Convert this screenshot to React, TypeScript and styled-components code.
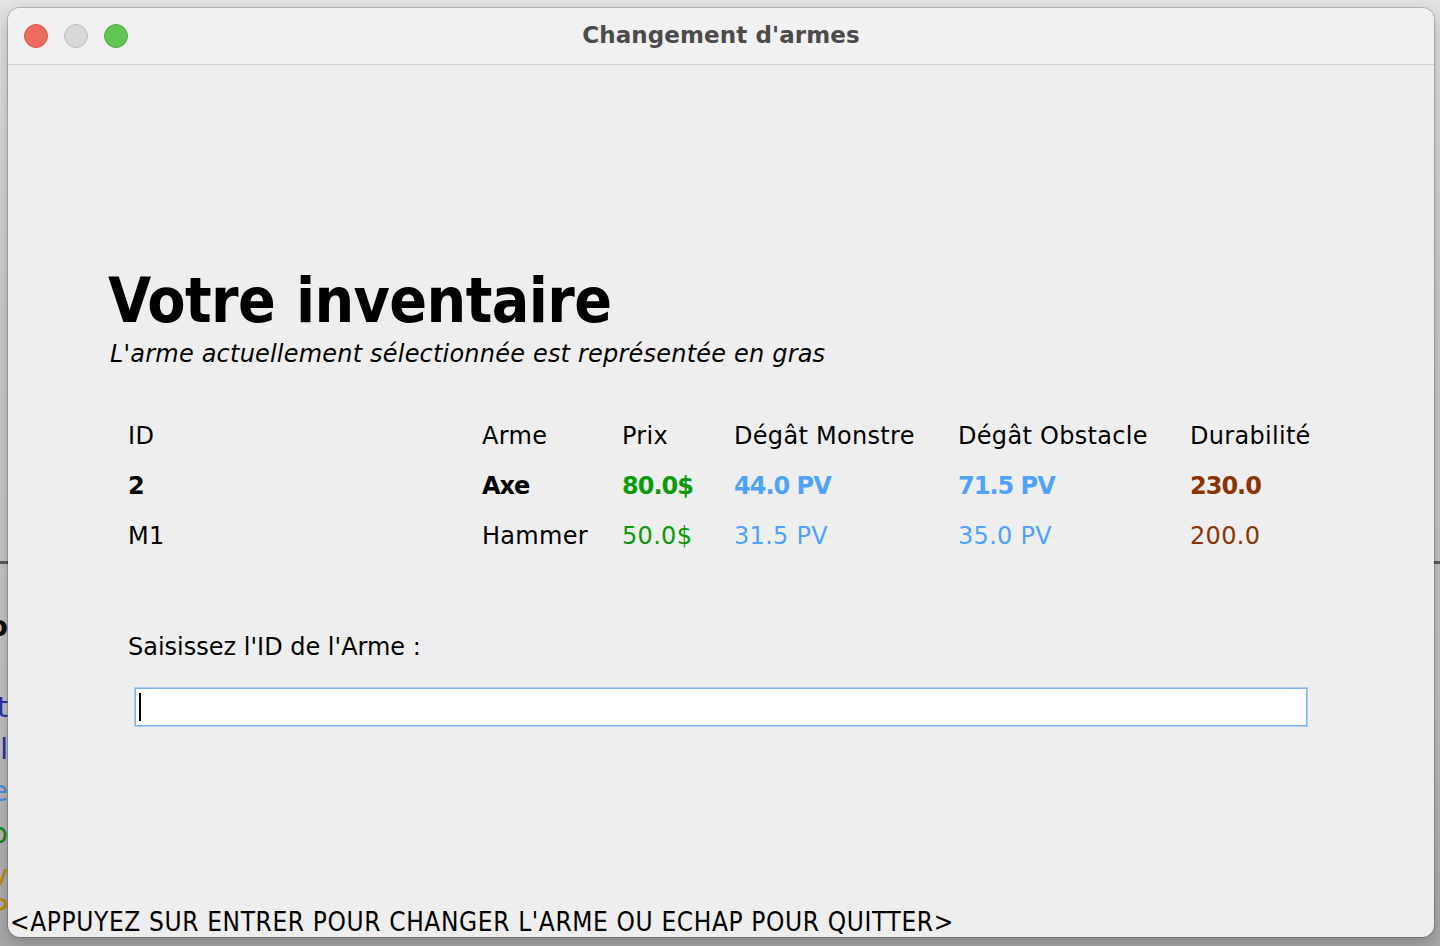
import React from "react";
import styled, { createGlobalStyle } from "styled-components";

const Global = createGlobalStyle`
  html, body { margin: 0; padding: 0; }
  body {
    width: 1440px;
    height: 946px;
    overflow: hidden;
    font-family: "DejaVu Sans", "Liberation Sans", sans-serif;
  }
`;

const Desktop = styled.div`
  position: relative;
  width: 1440px;
  height: 946px;
  box-sizing: border-box;
  padding: 8px 6px 9px 8px;
  background:
    linear-gradient(to bottom, transparent 561px, #5c5c5c 561px, #5c5c5c 564px, transparent 564px),
    linear-gradient(to bottom, #e4e4e4 0px, #cfcfcf 300px, #c4c4c4 700px, #a9a9a9 946px);
`;

const BehindStrip = styled.div`
  position: absolute;
  left: 0;
  top: 615px;
  width: 8px;
  overflow: hidden;
  display: flex;
  flex-direction: column;
  align-items: flex-end;
`;

const BehindGlyph = styled.span<{ $c: string; $top: number; $bold?: boolean }>`
  display: block;
  margin-top: ${(p) => p.$top}px;
  height: 24px;
  line-height: 24px;
  font-size: 28px;
  font-weight: ${(p) => (p.$bold ? 700 : 400)};
  color: ${(p) => p.$c};
  white-space: nowrap;
`;

const Window = styled.div`
  position: relative;
  width: 1426px;
  height: 929px;
  border-radius: 12px;
  overflow: hidden;
  background: #eeeeee;
  display: flex;
  flex-direction: column;
  box-shadow: 0 0 0 1px rgba(0, 0, 0, 0.18), 0 6px 18px rgba(0, 0, 0, 0.25);
`;

const TitleBar = styled.div`
  position: relative;
  height: 56px;
  flex: 0 0 56px;
  background: #f1f1f1;
  border-bottom: 1px solid #d3d3d3;
  display: flex;
  align-items: center;
  justify-content: center;
`;

const Lights = styled.div`
  position: absolute;
  left: 16px;
  top: 16px;
  display: flex;
  gap: 16px;
`;

const Light = styled.span<{ $bg: string; $border: string }>`
  width: 24px;
  height: 24px;
  box-sizing: border-box;
  border-radius: 50%;
  background: ${(p) => p.$bg};
  border: 1px solid ${(p) => p.$border};
`;

const WindowTitle = styled.div`
  font-family: "DejaVu Sans", sans-serif;
  font-weight: 700;
  font-size: 23px;
  color: #4b4b4b;
  letter-spacing: 0.1px;
  margin-top: -2px;
`;

const Content = styled.div`
  flex: 1;
  display: flex;
  flex-direction: column;
  padding-left: 100px;
  color: #000;
`;

const Heading = styled.h1`
  margin: 205px 0 0 0;
  font-family: "DejaVu Sans", sans-serif;
  font-stretch: condensed;
  font-weight: 700;
  font-size: 62px;
  line-height: 62px;
  letter-spacing: -0.6px;
  word-spacing: 2px;
`;

const Subtitle = styled.p`
  margin: 8px 0 0 2px;
  font-family: "DejaVu Sans", sans-serif;
  font-style: italic;
  font-size: 24px;
  line-height: 28px;
  letter-spacing: 0.2px;
`;

const Table = styled.div`
  margin: 43px 0 0 20px;
  display: grid;
  grid-template-columns: 354px 140px 112px 224px 232px auto;
  grid-auto-rows: 50px;
  font-family: "DejaVu Sans", sans-serif;
  font-size: 24px;
  line-height: 50px;
`;

const Cell = styled.div<{ $color?: string; $bold?: boolean }>`
  color: ${(p) => p.$color || "#000"};
  font-weight: ${(p) => (p.$bold ? 700 : 400)};
  white-space: nowrap;
  letter-spacing: ${(p) => (p.$bold ? "-1px" : "0.3px")};
`;

const Label = styled.div`
  margin: 61px 0 0 20px;
  font-family: "DejaVu Sans", sans-serif;
  font-size: 24px;
  line-height: 50px;
`;

const Field = styled.div`
  margin: 16px 0 0 27px;
  width: 1172px;
  height: 38px;
  box-sizing: border-box;
  background: #ffffff;
  border: 1px solid #7fb2ec;
  box-shadow: 0 0 0 1px #a9cdf4;
  display: flex;
  align-items: center;
  padding-left: 3px;
`;

const Caret = styled.span`
  width: 2px;
  height: 28px;
  background: #000;
`;

const Footer = styled.div`
  margin-top: auto;
  margin-left: -98px;
  margin-bottom: 1px;
  font-family: "DejaVu Sans", sans-serif;
  font-stretch: condensed;
  font-size: 26px;
  line-height: 28px;
  letter-spacing: 0.62px;
  white-space: nowrap;
`;

const COLORS = {
  green: "#0b9a0b",
  blue: "#4ea2f7",
  brown: "#8a3406",
};

type Row = {
  id: string;
  arme: string;
  prix: string;
  monstre: string;
  obstacle: string;
  dura: string;
  bold?: boolean;
};

const rows: Row[] = [
  { id: "2", arme: "Axe", prix: "80.0$", monstre: "44.0 PV", obstacle: "71.5 PV", dura: "230.0", bold: true },
  { id: "M1", arme: "Hammer", prix: "50.0$", monstre: "31.5 PV", obstacle: "35.0 PV", dura: "200.0" },
];

export default function App() {
  return (
    <>
      <Global />
      <Desktop>
        <BehindStrip>
          <BehindGlyph $c="#111" $top={0} $bold>o</BehindGlyph>
          <BehindGlyph $c="#2b2fb5" $top={57}>ot</BehindGlyph>
          <BehindGlyph $c="#2b2fb5" $top={18}>ol</BehindGlyph>
          <BehindGlyph $c="#4a90e2" $top={18}>e</BehindGlyph>
          <BehindGlyph $c="#0f8a0f" $top={18}>o</BehindGlyph>
          <BehindGlyph $c="#c08a10" $top={18}>v</BehindGlyph>
          <BehindGlyph $c="#c08a10" $top={10}>P</BehindGlyph>
        </BehindStrip>
        <Window>
          <TitleBar>
            <Lights>
              <Light $bg="#ee6b5f" $border="#d9564b" />
              <Light $bg="#d8d8d8" $border="#bdbdbd" />
              <Light $bg="#62c655" $border="#4fae43" />
            </Lights>
            <WindowTitle>Changement d'armes</WindowTitle>
          </TitleBar>
          <Content>
            <Heading>Votre inventaire</Heading>
            <Subtitle>L'arme actuellement sélectionnée est représentée en gras</Subtitle>
            <Table>
              <Cell>ID</Cell>
              <Cell>Arme</Cell>
              <Cell>Prix</Cell>
              <Cell>Dégât Monstre</Cell>
              <Cell>Dégât Obstacle</Cell>
              <Cell>Durabilité</Cell>
              {rows.map((r) => (
                <React.Fragment key={r.id}>
                  <Cell $bold={r.bold}>{r.id}</Cell>
                  <Cell $bold={r.bold}>{r.arme}</Cell>
                  <Cell $bold={r.bold} $color={COLORS.green}>{r.prix}</Cell>
                  <Cell $bold={r.bold} $color={COLORS.blue}>{r.monstre}</Cell>
                  <Cell $bold={r.bold} $color={COLORS.blue}>{r.obstacle}</Cell>
                  <Cell $bold={r.bold} $color={COLORS.brown}>{r.dura}</Cell>
                </React.Fragment>
              ))}
            </Table>
            <Label>Saisissez l'ID de l'Arme :</Label>
            <Field role="textbox" aria-label="ID de l'arme">
              <Caret />
            </Field>
            <Footer>&lt;APPUYEZ SUR ENTRER POUR CHANGER L'ARME OU ECHAP POUR QUITTER&gt;</Footer>
          </Content>
        </Window>
      </Desktop>
    </>
  );
}
